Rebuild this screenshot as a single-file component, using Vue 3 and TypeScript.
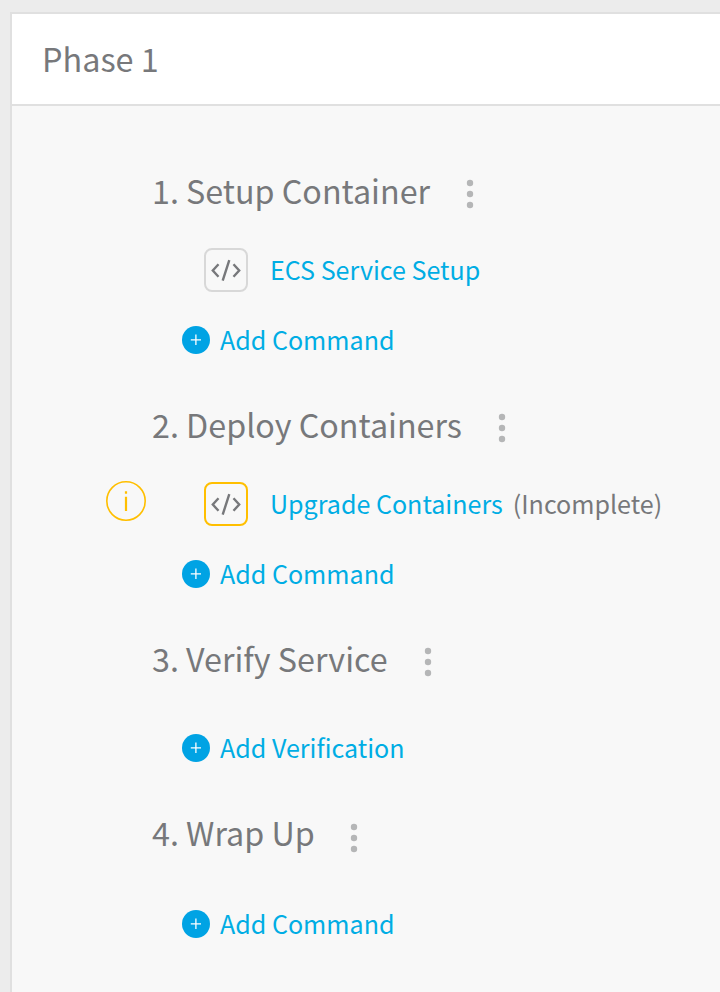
<script setup lang="ts">
interface Command { name: string; incomplete?: boolean }
interface Step { title: string; commands: Command[]; action: string }

const steps: Step[] = [
  { title: '1. Setup Container', commands: [{ name: 'ECS Service Setup' }], action: 'Add Command' },
  { title: '2. Deploy Containers', commands: [{ name: 'Upgrade Containers', incomplete: true }], action: 'Add Command' },
  { title: '3. Verify Service', commands: [], action: 'Add Verification' },
  { title: '4. Wrap Up', commands: [], action: 'Add Command' },
]
</script>

<template>
  <main class="page">
    <section class="phase">
      <header class="head">Phase 1</header>
      <div class="steps">
        <section v-for="step in steps" :key="step.title" class="step" :class="{ empty: !step.commands.length }">
          <div class="title">
            <span>{{ step.title }}</span>
            <svg class="dots" width="8" height="30" viewBox="0 0 8 30"><circle cx="4" cy="4" r="3.2" /><circle cx="4" cy="15" r="3.2" /><circle cx="4" cy="26" r="3.2" /></svg>
          </div>
          <div v-for="c in step.commands" :key="c.name" class="command">
            <div class="gutter">
              <svg v-if="c.incomplete" class="info" width="40" height="40" viewBox="0 0 40 40"><circle cx="20" cy="20" r="19.2" /><path d="M20 15.800V30M20 10.200V12.800" /></svg>
            </div>
            <span class="code" :class="{ warn: c.incomplete }">
              <svg width="32" height="24" viewBox="0 0 32 24"><path d="M8.500 6.200L2.800 12.500L8.500 18.800M23.500 6.200L29.200 12.500L23.500 18.800M19.300 2.200L12.700 22.600" /></svg>
            </span>
            <a class="link">{{ c.name }}</a>
            <span v-if="c.incomplete" class="note">(Incomplete)</span>
          </div>
          <div class="add">
            <svg width="28" height="28" viewBox="0 0 28 28"><circle cx="14" cy="14" r="14" /><path d="M8.800 13.800H19M13.900 8.600V19" /></svg>
            <a>{{ step.action }}</a>
          </div>
        </section>
      </div>
    </section>
  </main>
</template>

<style>
body { background: #ececec; }
</style>
<style scoped>
.page { box-sizing: border-box; height: 992px; padding: 12px 0 0 10px; overflow: hidden; background: #ececec; font-family: "Noto Sans CJK SC", "Open Sans", sans-serif; color: #77787b; }
.phase { box-sizing: border-box; height: 980px; border-top: 2px solid #e0e0e0; border-left: 2px solid #e0e0e0; background: #f8f8f8; }
.head { box-sizing: border-box; height: 92px; padding: 0 0 0 30px; border-bottom: 2px solid #e0e0e0; background: #fff; font-size: 32.4px; line-height: 88px; }
.steps { padding-top: 62px; }
.step { height: 234px; }
.step.empty { height: 174px; }
.title { display: flex; align-items: center; gap: 36px; height: 52px; padding-left: 140px; font-size: 32.25px; white-space: nowrap; }
.title span { height: 52px; line-height: 44px; }
.dots { fill: #b5b6b7; }
.step:last-child .dots { margin: 4px 0 0 -1px; }
.command { display: flex; align-items: center; height: 44px; margin-top: 28px; font-size: 25.07px; white-space: nowrap; }
.gutter { width: 98px; height: 44px; padding-left: 94px; }
.info { display: block; margin-top: -1px; fill: none; stroke: #ffbf00; stroke-width: 1.6; }
.info path { stroke-width: 2.2; }
.code { box-sizing: border-box; display: flex; align-items: center; justify-content: center; width: 44px; height: 44px; border: 2px solid #d8d8d8; border-radius: 8px; }
.code.warn { border-color: #ffbf00; }
.code svg { fill: none; stroke: #77787b; stroke-width: 2.4; }
.link, .note { height: 44px; line-height: 42px; }
.link { margin-left: 22px; color: #00ade4; }
.note { margin-left: 10px; }
.add { display: flex; align-items: center; gap: 10px; height: 40px; margin-top: 28px; padding-left: 170px; color: #00ade4; font-size: 25.07px; }
.add a { height: 40px; line-height: 38px; }
.add circle { fill: #00a3e4; }
.add path { stroke: #fff; stroke-width: 1.3; }
.empty .add { margin-top: 40px; }
.empty:last-child .add { margin-top: 42px; }
</style>
